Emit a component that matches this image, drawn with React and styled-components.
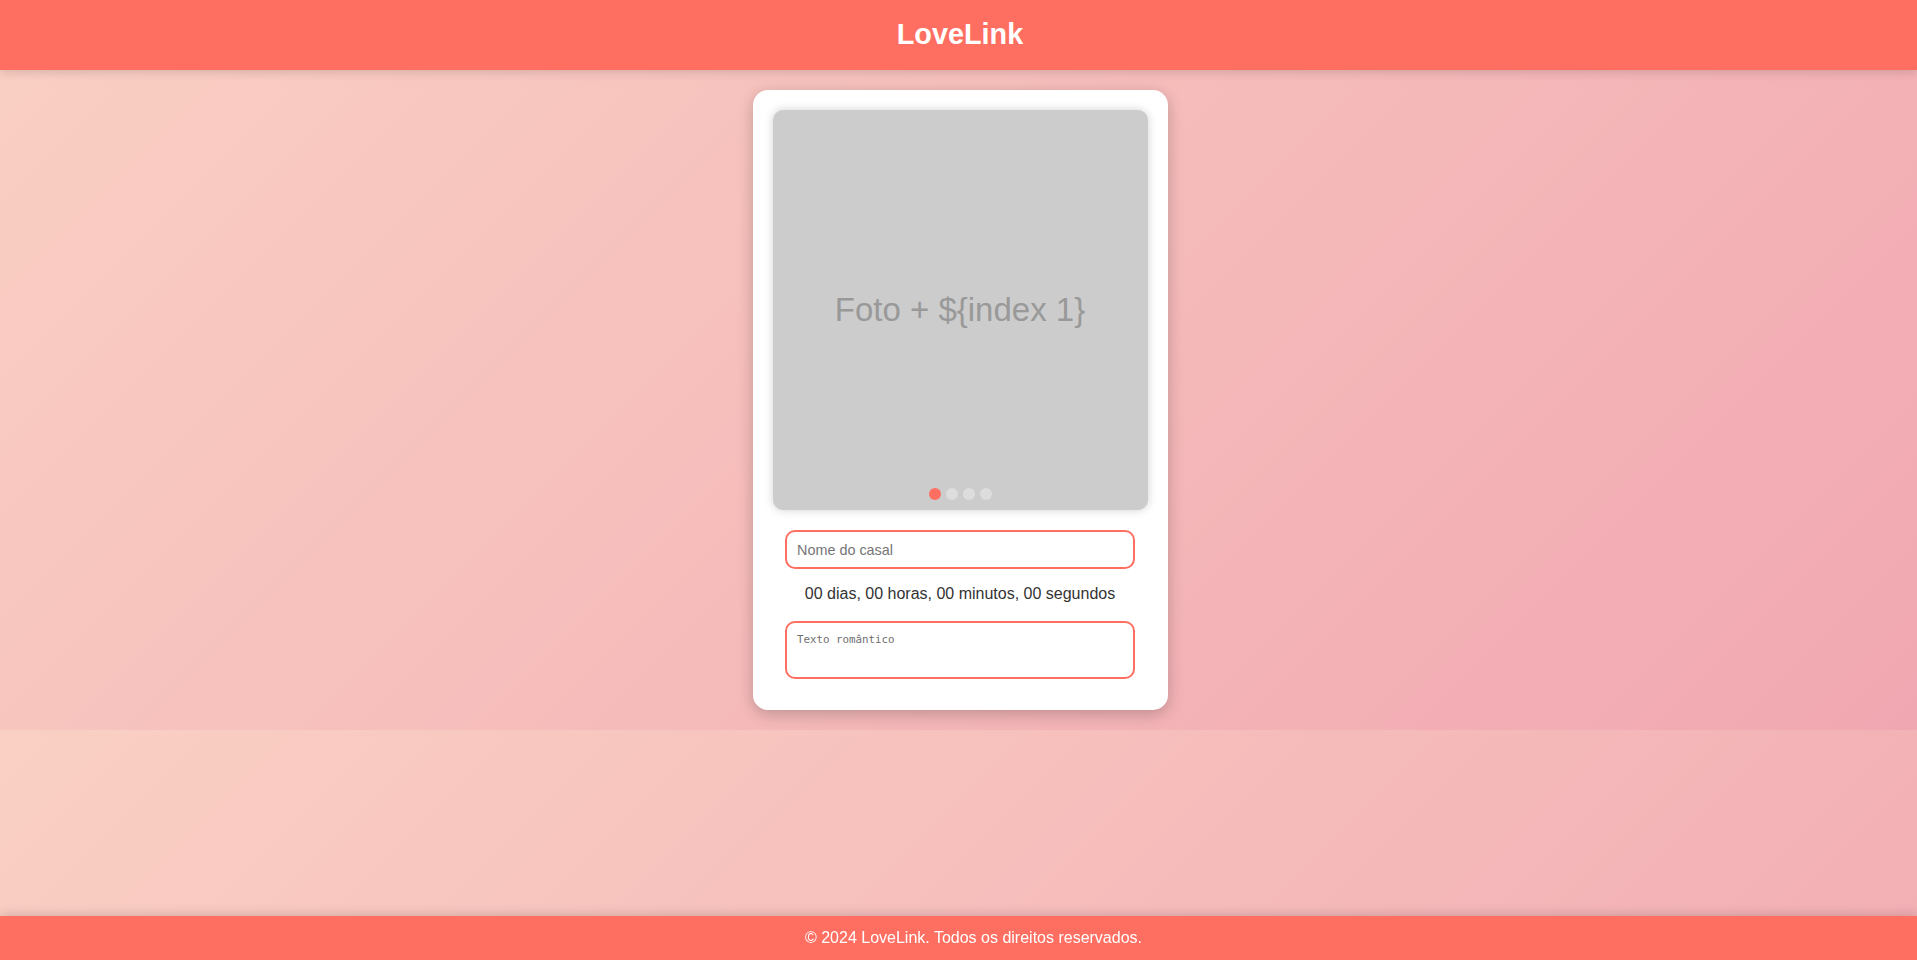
import React from "react";
import styled, { createGlobalStyle } from "styled-components";

const GlobalStyle = createGlobalStyle`
  * { box-sizing: border-box; }
  body {
    margin: 0;
    font-family: "Liberation Sans", Arial, sans-serif;
    background: linear-gradient(135deg, #fad0c4 0%, #f1a7b1 100%);
    color: #333;
  }
`;

const Header = styled.header`
  height: 70px;
  padding-bottom: 2px;
  background: #ff6f61;
  display: flex;
  align-items: center;
  justify-content: center;
  box-shadow: 0 2px 10px rgba(0, 0, 0, 0.15);
  position: relative;
  z-index: 1;
`;

const Title = styled.h1`
  margin: 0 0 0 3px;
  color: #fff;
  font-size: 28.8px;
  font-weight: 700;
`;

const Main = styled.main`
  padding: 20px 0 20px 3px;
  display: flex;
  justify-content: center;
`;

const Card = styled.section`
  width: 415px;
  height: 620px;
  background: #fff;
  border-radius: 15px;
  padding: 20px;
  box-shadow: 0 4px 16px rgba(0, 0, 0, 0.22);
  display: flex;
  flex-direction: column;
  align-items: center;
`;

const Photo = styled.div`
  position: relative;
  width: 375px;
  height: 400px;
  flex-shrink: 0;
  border-radius: 10px;
  background: #ccc;
  box-shadow: 0 0 10px rgba(0, 0, 0, 0.18);
  display: flex;
  align-items: center;
  justify-content: center;
  color: #999;
  font-size: 33px;
`;

const Dots = styled.div`
  position: absolute;
  bottom: 10px;
  left: 0;
  right: 0;
  display: flex;
  justify-content: center;
  gap: 5px;
`;

const Dot = styled.span`
  width: 12px;
  height: 12px;
  border-radius: 50%;
  background: ${(p) => (p.$active ? "#ff6f61" : "#dddddd")};
`;

const NameInput = styled.input`
  width: 350px;
  height: 39px;
  margin-top: 20px;
  padding: 0 10px;
  border: 2px solid #ff6f61;
  border-radius: 10px;
  font-family: "Liberation Sans", Arial, sans-serif;
  font-size: 14.4px;
  color: #333;
  outline: none;
  &::placeholder { color: #757575; }
`;

const Counter = styled.p`
  margin: 15px 0 17px;
  line-height: 20px;
  font-size: 16px;
  color: #333;
  text-align: center;
`;

const Romance = styled.textarea`
  width: 350px;
  height: 58px;
  padding: 10px;
  border: 2px solid #ff6f61;
  border-radius: 10px;
  font-family: "DejaVu Sans Mono", monospace;
  font-size: 10.8px;
  resize: none;
  outline: none;
  &::placeholder { color: #6f6f6f; }
`;

const Footer = styled.footer`
  position: fixed;
  left: 0;
  right: 0;
  bottom: 0;
  height: 44px;
  background: #ff6f61;
  color: #fff;
  font-size: 16px;
  display: flex;
  align-items: center;
  justify-content: center;
  padding-left: 30px;
  box-shadow: 0 -2px 10px rgba(0, 0, 0, 0.15);
`;

export default function App() {
  return (
    <>
      <GlobalStyle />
      <Header>
        <Title>LoveLink</Title>
      </Header>
      <Main>
        <Card>
          <Photo>
            {"Foto + ${index 1}"}
            <Dots>
              <Dot $active />
              <Dot />
              <Dot />
              <Dot />
            </Dots>
          </Photo>
          <NameInput placeholder="Nome do casal" />
          <Counter>00 dias, 00 horas, 00 minutos, 00 segundos</Counter>
          <Romance placeholder="Texto romântico" />
        </Card>
      </Main>
      <Footer>© 2024 LoveLink. Todos os direitos reservados.</Footer>
    </>
  );
}
